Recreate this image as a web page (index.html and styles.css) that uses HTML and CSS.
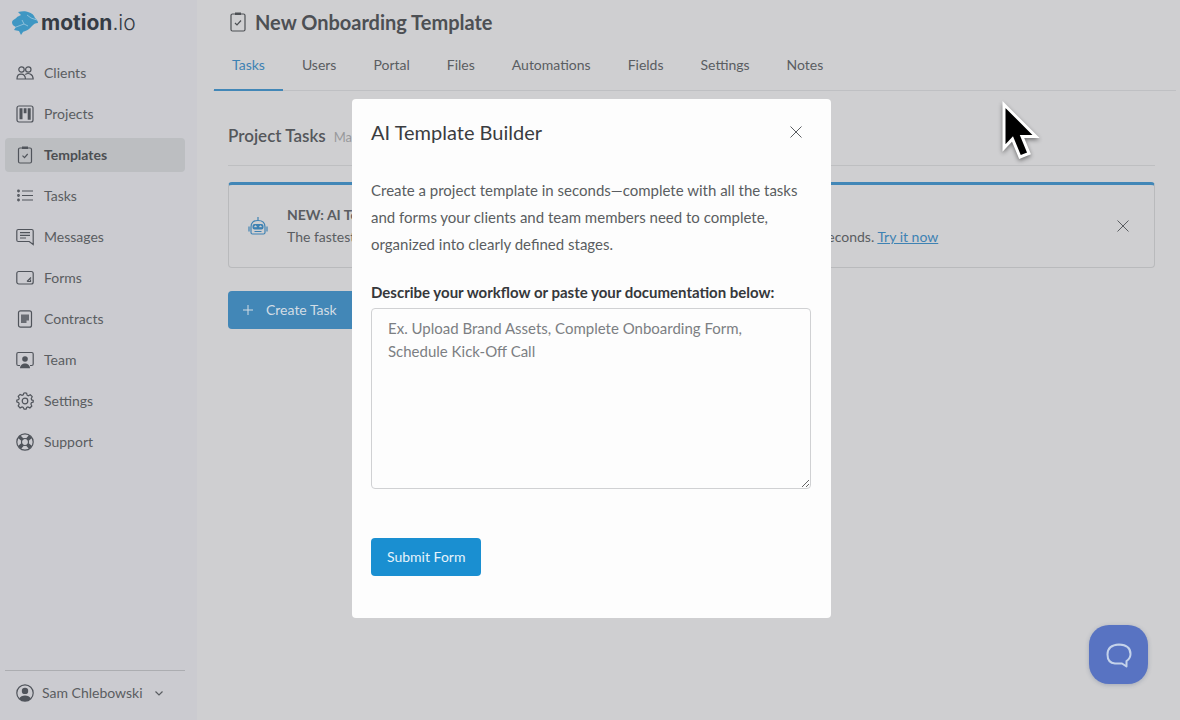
FILE: index.html
```html
<!DOCTYPE html>
<html lang="en">
<head>
<meta charset="utf-8">
<meta name="viewport" content="width=device-width, initial-scale=1">
<title>New Onboarding Template</title>
<link rel="stylesheet" href="styles.css">
</head>
<body>
<div class="app">
  <aside class="sidebar">
    <a class="logo" href="#">
      <svg class="logo-mark" viewBox="0 0 26 24" aria-hidden="true">
        <path fill="#3f97c3" d="M6 1 C10 0 14 0 16 1 C20 2 22 4 23 7 C25 9 26 10 26 12 C23 12 22 13 20 15 C17 19 13 20 11 21 L9 24 L7 20 L2 19 L4 16 C1 15 0 13 0 11 C1 8 4 8 5 6 L9 4 Z"/>
        <path fill="none" stroke="#8cbfda" stroke-width="1" d="M4 16 L12 13 L16 15 M12 13 L10 9 M15 4 L19 7 L25 9"/>
      </svg>
      <span class="logo-text">motion<span class="logo-suffix">.io</span></span>
    </a>
    <nav class="menu">
      <a class="menu-item" href="#">
        <svg class="icon" viewBox="0 0 18 18"><circle cx="5.5" cy="5.5" r="2.7"/><circle cx="12.3" cy="5.5" r="2.7"/><path d="M1 15 C1 8.500 9 8.500 9.500 15 Z M9.300 10.500 C12 8.500 17 9.500 17.200 15 H9.500"/></svg>
        Clients</a>
      <a class="menu-item" href="#">
        <svg class="icon" viewBox="0 0 18 18"><rect x="1" y="1" width="16" height="16" rx="2"/><path class="solid" d="M3.500 3.300h3v11h-3z M7.700 3.300h2.800v5H7.700z M11.700 3.300h3v11.500h-3z"/></svg>
        Projects</a>
      <a class="menu-item active" href="#" aria-current="page">
        <svg class="icon" viewBox="0 0 18 18"><rect x="2.500" y="2" width="13" height="15" rx="1.500"/><path class="solid" d="M6 .5h6v2.500H6z"/><path d="M6.500 9.700l2 2 3.200-3.700"/></svg>
        Templates</a>
      <a class="menu-item" href="#">
        <svg class="icon" viewBox="0 0 18 18"><path d="M6 4h11M6 8.500h11M6 13h11"/><circle cx="2.500" cy="4" r=".8"/><circle cx="2.500" cy="8.500" r=".8"/><circle cx="2.500" cy="13" r=".8"/></svg>
        Tasks</a>
      <a class="menu-item" href="#">
        <svg class="icon" viewBox="0 0 18 18"><path d="M17.200 16.500l-4-3H2.300Q.8 13.500.8 12V3Q.8 1.500 2.300 1.500h13.400q1.500 0 1.500 1.500z M4 4.700h10M4 7.300h10M4 10h6"/></svg>
        Messages</a>
      <a class="menu-item" href="#">
        <svg class="icon" viewBox="0 0 18 18"><rect x=".8" y="2.500" width="16.400" height="12.500" rx="2"/><path d="M11 12.500l4-4M14.500 10.500v2h-3"/></svg>
        Forms</a>
      <a class="menu-item" href="#">
        <svg class="icon" viewBox="0 0 18 18"><rect x="2.500" y=".8" width="13" height="16.400" rx="2"/><path class="solid" opacity=".8" d="M5 4.500h8v6h-2.500v2.500H5z"/></svg>
        Contracts</a>
      <a class="menu-item" href="#">
        <svg class="icon" viewBox="0 0 18 18"><path d="M4 14.500H2.300Q.8 14.500.8 13V3Q.8 1.500 2.300 1.500h13.400q1.500 0 1.500 1.500v10q0 1.500-1.500 1.500H14"/><circle class="solid" cx="9" cy="8" r="2.800"/><path class="solid" d="M4 17.300C4 10.800 14 10.800 14 17.300z"/></svg>
        Team</a>
      <a class="menu-item" href="#">
        <svg class="icon" viewBox="0 0 18 18"><circle cx="9" cy="9" r="2.800"/><path d="M9 .8l1.600.4.500 2 1.200.6 2-1 1.900 1.900-1 2 .5 1.200 1.500.5v1.600l-1.800.8-.5 1.200.9 2-1.900 1.900-2-1-1.200.6-.6 1.700H8.100l-.8-1.700-1.200-.6-2 1-1.900-1.900 1-2-.5-1.200L.8 9.800V8.200l1.900-.7.500-1.200-1-2 1.900-1.900 2 1 1.200-.6.500-1.600z"/></svg>
        Settings</a>
      <a class="menu-item" href="#">
        <svg class="icon" viewBox="0 0 18 18"><circle cx="9" cy="9" r="8.200"/><circle cx="9" cy="9" r="3.500"/><path class="solid" d="M2 5l2-3 4 4-2.500 2zM13 2l3 3-3.500 3L10 5.500zM16 13l-3 3-3-3.500 2.500-2.500zM5 16l-3-3 3.500-3L8 12.500z"/></svg>
        Support</a>
    </nav>
    <button class="account" type="button">
      <svg class="icon" viewBox="0 0 18 18"><circle cx="9" cy="9" r="8.200"/><circle class="solid" cx="9" cy="6.900" r="3.200"/><path class="solid" d="M3.200 14.500C5 10.500 13 10.500 14.800 14.500 12 17.900 6 17.900 3.200 14.500z"/></svg>
      Sam Chlebowski
      <svg class="chevron" viewBox="0 0 10 10"><path d="M1.500 3.500L5 7l3.500-3.500"/></svg>
    </button>
  </aside>

  <main class="main">
    <header class="header">
      <h1 class="title">
        <svg class="title-icon" viewBox="0 0 16 20"><rect x="1" y="2" width="14" height="17" rx="1.500"/><path class="solid" d="M5 .5h6V3H5z"/><path d="M5 11l2 2 4-4.500"/></svg>
        New Onboarding Template</h1>
      <nav class="tabs">
        <a class="tab current" href="#" aria-current="page">Tasks</a>
        <a class="tab" href="#">Users</a>
        <a class="tab" href="#">Portal</a>
        <a class="tab" href="#">Files</a>
        <a class="tab" href="#">Automations</a>
        <a class="tab" href="#">Fields</a>
        <a class="tab" href="#">Settings</a>
        <a class="tab" href="#">Notes</a>
      </nav>
    </header>
    <section class="content">
      <div class="section-head">
        <h2 class="section-title">Project Tasks</h2>
        <span class="section-note">Manage</span>
      </div>
      <div class="banner">
        <svg class="robot" viewBox="0 0 20 20"><path d="M10 1v3M3 16.500V11q0-6.500 7-6.500t7 6.500v5.500q0 1.500-1.500 1.500h-11Q3 18 3 16.500z M1 10.500v5M19 10.500v5M6.500 15.500h7"/><rect class="solid" x="4.500" y="8" width="11" height="5.500" rx="2"/><path class="eyes" d="M6.500 11l1-1 1 1M11.500 11l1-1 1 1"/></svg>
        <div class="banner-text">
          <strong>NEW: AI Template Builder</strong>
          <p>The fastest way to build a project template. Describe your workflow and get all tasks in seconds. <a href="#">Try it now</a></p>
        </div>
        <button class="close" type="button" aria-label="Dismiss"><svg viewBox="0 0 12 12"><path d="M.5.5l11 11M11.500.5l-11 11"/></svg></button>
      </div>
      <button class="button create" type="button"><svg class="plus" viewBox="0 0 10 10"><path d="M5 0v10M0 5h10"/></svg>Create Task</button>
    </section>
  </main>
</div>

<button class="chat" type="button" aria-label="Open chat">
  <svg viewBox="0 0 26 26"><path d="M20.500 24.500l-4.500-3H9Q1.500 21 1.500 12.500 1.500 3 13 2.500 24.500 3 24.500 12q0 4.500-4 7z"/></svg>
</button>

<div class="overlay">
  <form class="dialog" role="dialog" aria-modal="true" aria-labelledby="dialog-title">
    <div class="dialog-head">
      <h2 class="dialog-title" id="dialog-title">AI Template Builder</h2>
      <button class="close" type="button" aria-label="Close"><svg viewBox="0 0 12 12"><path d="M.5.5l11 11M11.500.5l-11 11"/></svg></button>
    </div>
    <p class="dialog-text">Create a project template in seconds—complete with all the tasks and forms your clients and team members need to complete, organized into clearly defined stages.</p>
    <label class="label" for="workflow">Describe your workflow or paste your documentation below:</label>
    <textarea class="field" id="workflow" placeholder="Ex. Upload Brand Assets, Complete Onboarding Form, Schedule Kick-Off Call"></textarea>
    <button class="button submit" type="submit">Submit Form</button>
  </form>
</div>

<svg class="cursor" viewBox="0 0 44 64" aria-hidden="true"><path fill="#000" stroke="#fff" stroke-width="3" d="M4 6.500V50l8.500-9 7.500 18 9-3.500-7-17h14z"/></svg>
</body>
</html>
```

FILE: styles.css
```css
* { box-sizing: border-box; }

body {
  margin: 0;
  background: #cfcfd1;
  color: #5a5d61;
  font: 14px/20px Lato, sans-serif;
}

h1, h2, p { margin: 0; }
a { color: inherit; text-decoration: none; }
button { font: inherit; color: inherit; border: 0; background: none; padding: 0; cursor: pointer; }
svg { flex: none; fill: none; stroke: currentColor; }
.solid { fill: currentColor; stroke: none; }

.app { display: flex; min-height: 100vh; }

/* Sidebar */
.sidebar {
  display: flex;
  flex-direction: column;
  flex: none;
  width: 197px;
  padding: 8px 12px 8px 5px;
  background: #cbcbd0;
}
.logo { display: flex; align-items: center; gap: 3px; padding-left: 7px; height: 30px; }
.logo-mark { width: 26px; height: 24px; stroke: none; }
.logo-text { color: #353c45; font: 700 21px/30px Inter, sans-serif; }
.logo-suffix { font-weight: 300; }

.menu { display: flex; flex-direction: column; gap: 7px; margin-top: 18px; }
.menu-item {
  display: flex;
  align-items: center;
  gap: 10px;
  height: 34px;
  padding: 0 11px;
  border-radius: 4px;
}
.menu-item.active { background: #bcbec1; color: #4c4f53; font-weight: 700; }
.icon { width: 18px; height: 18px; stroke-width: 1.2; color: #50545b; }

.account {
  display: flex;
  align-items: center;
  gap: 8px;
  height: 42px;
  margin-top: auto;
  padding: 2px 11px 0;
  border-top: 1px solid #acadb1;
}
.chevron { width: 10px; height: 10px; margin-left: 3px; stroke-width: 1.2; }

/* Main area */
.main { flex: 1; min-width: 0; }
.header { padding: 7px 4px 0 16px; }
.title {
  display: flex;
  align-items: center;
  gap: 9px;
  padding-left: 17px;
  color: #4d5054;
  font-size: 20px;
  line-height: 30px;
}
.title-icon { width: 16px; height: 20px; stroke-width: 1.2; }
.tabs { display: flex; gap: 1px; margin-top: 3px; padding-left: 1px; border-bottom: 1px solid #bfc0c3; }
.tab { padding: 15px 18px 14px; margin-bottom: -1px; border-bottom: 2px solid transparent; }
.tab.current { color: #3e82b3; border-color: #4287b7; }

.content { padding: 29px 25px 0 31px; }
.section-head {
  display: flex;
  align-items: baseline;
  gap: 8px;
  padding-bottom: 13px;
  border-bottom: 1px solid #bebfc1;
}
.section-title { color: #54575b; font-size: 17px; line-height: 32px; font-weight: 600; }
.section-note { color: #98999c; font-size: 13px; }

.banner {
  display: flex;
  align-items: center;
  margin-top: 16px;
  min-height: 86px;
  padding: 0 25px 0 19px;
  border: 1px solid #b9babc;
  border-top: 3px solid #4287b7;
  border-radius: 4px;
}
.robot { width: 20px; height: 20px; color: #3e82b3; stroke-width: 1.2; }
.eyes { stroke: #cfcfd1; }
.banner-text { flex: 1; margin-left: 19px; line-height: 22px; }
.banner-text a { color: #3e82b3; text-decoration: underline; }
.close { display: flex; padding: 0; }
.close svg { width: 12px; height: 12px; }

.button {
  display: inline-flex;
  align-items: center;
  height: 38px;
  padding: 0 16px;
  border-radius: 4px;
}
.create { gap: 13px; width: 144px; margin-top: 23px; padding: 0 15px; background: #4287b7; color: #d2dde5; }
.plus { width: 10px; height: 10px; }

/* Chat launcher */
.chat {
  position: fixed;
  right: 32px;
  bottom: 36px;
  display: grid;
  place-items: center;
  width: 59px;
  height: 59px;
  border-radius: 20px;
  background: #5873c2;
  color: #c4d2ea;
  box-shadow: 0 1px 4px rgba(60, 80, 120, .3);
}
.chat svg { width: 26px; height: 26px; stroke-width: 2; stroke-linejoin: round; }

/* Dialog */
.overlay {
  position: fixed;
  inset: 0;
  display: flex;
  align-items: flex-start;
  justify-content: center;
  padding: 99px 16px 16px 19px;
}
.dialog {
  width: 100%;
  max-width: 479px;
  padding: 18px 20px 42px 19px;
  border-radius: 4px;
  background: #fdfdfd;
}
.dialog-head { display: flex; align-items: center; justify-content: space-between; padding-right: 9px; }
.dialog-title { color: #3a3c40; font-size: 20px; line-height: 30px; font-weight: 400; }
.dialog-text { margin-top: 30px; font-size: 15px; line-height: 27px; }
.label { display: block; margin-top: 23px; color: #36383b; font-size: 15px; line-height: 23px; font-weight: 700; }
.field {
  display: block;
  width: 100%;
  height: 181px;
  margin-top: 4px;
  padding: 8px 16px;
  border: 1px solid #d0d1d3;
  border-radius: 4px;
  background: transparent;
  font: 15px/23px Lato, sans-serif;
}
.field::placeholder { color: #7c7f83; opacity: 1; }
.submit { margin-top: 49px; background: #1a8fd1; color: #e6f3fb; }

.cursor {
  position: fixed;
  top: 98px;
  left: 1000px;
  width: 44px;
  height: 64px;
  filter: drop-shadow(0 2px 2px rgba(0, 0, 0, .45));
  pointer-events: none;
}
```
